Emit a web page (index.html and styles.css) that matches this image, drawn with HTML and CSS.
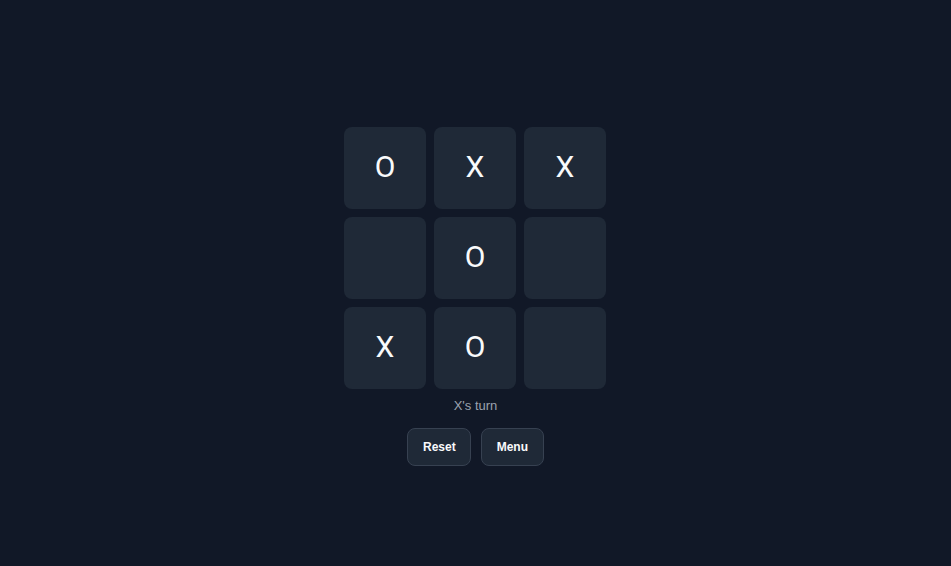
FILE: index.html
```html
<!DOCTYPE html>
<html>
<head>
<meta charset="utf-8">
<link rel="stylesheet" href="styles.css">
</head>
<body>
<main class="game">
  <div class="board">
    <div class="cell">O</div>
    <div class="cell">X</div>
    <div class="cell">X</div>
    <div class="cell"></div>
    <div class="cell">O</div>
    <div class="cell"></div>
    <div class="cell">X</div>
    <div class="cell">O</div>
    <div class="cell"></div>
  </div>
  <p class="status">X's turn</p>
  <div class="actions">
    <button class="btn">Reset</button>
    <button class="btn">Menu</button>
  </div>
</main>
</body>
</html>
```

FILE: styles.css
```css
html, body {
  margin: 0;
  padding: 0;
  background: #111827;
  font-family: "Liberation Sans", Arial, sans-serif;
}
.game {
  min-height: 566px;
  box-sizing: border-box;
  padding-top: 127px;
  display: flex;
  flex-direction: column;
  align-items: center;
}
.board {
  display: grid;
  grid-template-columns: repeat(3, 82px);
  grid-auto-rows: 82px;
  gap: 8px;
  padding-right: 1px;
}
.cell {
  background: #1f2937;
  border-radius: 8px;
  display: flex;
  align-items: center;
  justify-content: center;
  color: #f9fafb;
  font-family: Roboto, "Liberation Sans", sans-serif;
  font-size: 30px;
  line-height: 1;
  padding-bottom: 3px;
  box-sizing: border-box;
}
.status {
  margin: 8px 0 0;
  font-size: 13px;
  line-height: 18px;
  color: #9ca3af;
}
.actions {
  margin-top: 13px;
  display: flex;
  gap: 10px;
}
.btn {
  background: #1f2937;
  border: 1px solid #374151;
  border-radius: 8px;
  color: #f9fafb;
  font-family: "Liberation Sans", Arial, sans-serif;
  font-weight: bold;
  font-size: 12px;
  line-height: 14px;
  padding: 11px 14.5px;
}
```
